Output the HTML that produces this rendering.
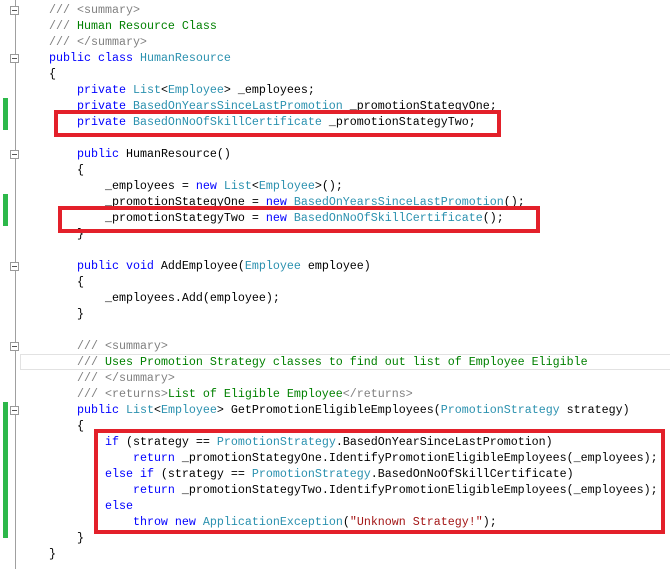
<!DOCTYPE html>
<html><head><style>
body{margin:0;width:670px;height:569px;background:#fff;position:relative;overflow:hidden}
#code{position:absolute;left:49px;top:2px;font-family:"Liberation Mono",monospace;font-size:11.67px;line-height:16px;white-space:pre;color:#000}
.k{color:#0000ff}.t{color:#2b91af}.c{color:#008000}.g{color:#808080}.s{color:#a31515}
.box{position:absolute;border:4px solid #e3202a;box-sizing:border-box}
.bar{position:absolute;left:3px;width:5px;background:#2db84a}
.fold{position:absolute;left:10px;width:9px;height:9px;border:1px solid #999;box-sizing:border-box;background:#fff}
.fold:after{content:"";position:absolute;left:1px;top:3px;width:5px;height:1px;background:#555}
.vl{position:absolute;left:15px;width:1px;background:#a0a0a0}
</style></head><body>
<div class="vl" style="top:0;height:569px"></div>
<div style="position:absolute;left:20px;top:354px;width:660px;height:16px;border:1px solid #e2e2e2;box-sizing:border-box"></div>
<div class="fold" style="top:6px"></div>
<div class="fold" style="top:54px"></div>
<div class="fold" style="top:150px"></div>
<div class="fold" style="top:262px"></div>
<div class="fold" style="top:342px"></div>
<div class="fold" style="top:406px"></div>
<div class="bar" style="top:98px;height:32px"></div>
<div class="bar" style="top:194px;height:32px"></div>
<div class="bar" style="top:402px;height:136px"></div>
<div id="code"><span class="g">/// &lt;summary&gt;</span>
<span class="g">///</span><span class="c"> Human Resource Class</span>
<span class="g">/// &lt;/summary&gt;</span>
<span class="k">public class</span> <span class="t">HumanResource</span>
{
    <span class="k">private</span> <span class="t">List</span>&lt;<span class="t">Employee</span>&gt; _employees;
    <span class="k">private</span> <span class="t">BasedOnYearsSinceLastPromotion</span> _promotionStategyOne;
    <span class="k">private</span> <span class="t">BasedOnNoOfSkillCertificate</span> _promotionStategyTwo;

    <span class="k">public</span> HumanResource()
    {
        _employees = <span class="k">new</span> <span class="t">List</span>&lt;<span class="t">Employee</span>&gt;();
        _promotionStategyOne = <span class="k">new</span> <span class="t">BasedOnYearsSinceLastPromotion</span>();
        _promotionStategyTwo = <span class="k">new</span> <span class="t">BasedOnNoOfSkillCertificate</span>();
    }

    <span class="k">public void</span> AddEmployee(<span class="t">Employee</span> employee)
    {
        _employees.Add(employee);
    }

    <span class="g">/// &lt;summary&gt;</span>
    <span class="g">///</span><span class="c"> Uses Promotion Strategy classes to find out list of Employee Eligible</span>
    <span class="g">/// &lt;/summary&gt;</span>
    <span class="g">/// &lt;returns&gt;</span><span class="c">List of Eligible Employee</span><span class="g">&lt;/returns&gt;</span>
    <span class="k">public</span> <span class="t">List</span>&lt;<span class="t">Employee</span>&gt; GetPromotionEligibleEmployees(<span class="t">PromotionStrategy</span> strategy)
    {
        <span class="k">if</span> (strategy == <span class="t">PromotionStrategy</span>.BasedOnYearSinceLastPromotion)
            <span class="k">return</span> _promotionStategyOne.IdentifyPromotionEligibleEmployees(_employees);
        <span class="k">else if</span> (strategy == <span class="t">PromotionStrategy</span>.BasedOnNoOfSkillCertificate)
            <span class="k">return</span> _promotionStategyTwo.IdentifyPromotionEligibleEmployees(_employees);
        <span class="k">else</span>
            <span class="k">throw new</span> <span class="t">ApplicationException</span>(<span class="s">"Unknown Strategy!"</span>);
    }
}</div>
<div class="box" style="left:54px;top:110px;width:447px;height:27px"></div>
<div class="box" style="left:58px;top:206px;width:482px;height:27px"></div>
<div class="box" style="left:94px;top:429px;width:571px;height:105px"></div>
</body></html>
